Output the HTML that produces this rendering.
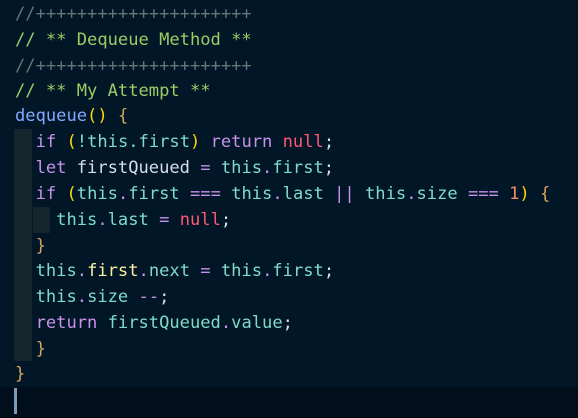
<!DOCTYPE html><html><head><style>
body{margin:0;width:578px;height:418px;background:#011627;overflow:hidden;font-family:"DejaVu Sans Mono","Liberation Mono",monospace;font-size:17.1px;}
.l{position:absolute;left:15px;height:26px;line-height:26px;white-space:pre;color:#d6deeb}
.c{color:#637777}.g{color:#9ccc65}.f{color:#82aaff}.k{color:#c792ea}.t{color:#7fdbca}.n{color:#ff5874}.p{color:#ffd700}.b{color:#d9a658}.y{color:#faf39f}.o{color:#c792ea}.num{color:#f78c6c}.w{color:#d6deeb}
.guide{position:absolute;background:#13262b}
</style></head><body>
<div class="guide" style="left:14px;top:129px;width:18px;height:232px"></div>
<div class="guide" style="left:33px;top:207px;width:17px;height:26px"></div>
<div style="position:absolute;left:0;top:387px;width:578px;height:31px;background:#010f1d"></div>
<div style="position:absolute;left:14px;top:388px;width:3px;height:26px;background:#7f9ab8"></div>
<div class="l c" style="top:1px">//+++++++++++++++++++++</div>
<div class="l g" style="top:27px">// ** Dequeue Method **</div>
<div class="l c" style="top:53px">//+++++++++++++++++++++</div>
<div class="l g" style="top:78px">// ** My Attempt **</div>
<div class="l" style="top:103px"><span class="f">dequeue</span><span class="p">()</span> <span class="b">{</span></div>
<div class="l" style="top:129px">  <span class="k">if</span> <span class="p">(</span><span class="t">!this.first</span><span class="p">)</span> <span class="k">return</span> <span class="n">null</span>;</div>
<div class="l" style="top:155px">  <span class="k">let</span> firstQueued <span class="o">=</span> <span class="t">this</span><span class="k">.</span><span class="t">first</span>;</div>
<div class="l" style="top:181px">  <span class="k">if</span> <span class="p">(</span><span class="t">this</span><span class="k">.</span><span class="t">first</span> <span class="o">===</span> <span class="t">this</span><span class="k">.</span><span class="t">last</span> <span class="o">||</span> <span class="t">this</span><span class="k">.</span><span class="t">size</span> <span class="o">===</span> <span class="num">1</span><span class="p">)</span> <span class="b">{</span></div>
<div class="l" style="top:207px">    <span class="t">this</span><span class="k">.</span><span class="t">last</span> <span class="o">=</span> <span class="n">null</span>;</div>
<div class="l" style="top:233px">  <span class="b">}</span></div>
<div class="l" style="top:258px">  <span class="t">this</span><span class="k">.</span><span class="y">first</span><span class="k">.</span><span class="t">next</span> <span class="o">=</span> <span class="t">this</span><span class="k">.</span><span class="t">first</span>;</div>
<div class="l" style="top:284px">  <span class="t">this</span><span class="k">.</span><span class="t">size</span> <span class="o">--</span>;</div>
<div class="l" style="top:310px">  <span class="k">return</span> <span class="t">firstQueued</span><span class="k">.</span><span class="t">value</span>;</div>
<div class="l" style="top:336px">  <span class="b">}</span></div>
<div class="l" style="top:361px"><span class="b">}</span></div>
</body></html>
